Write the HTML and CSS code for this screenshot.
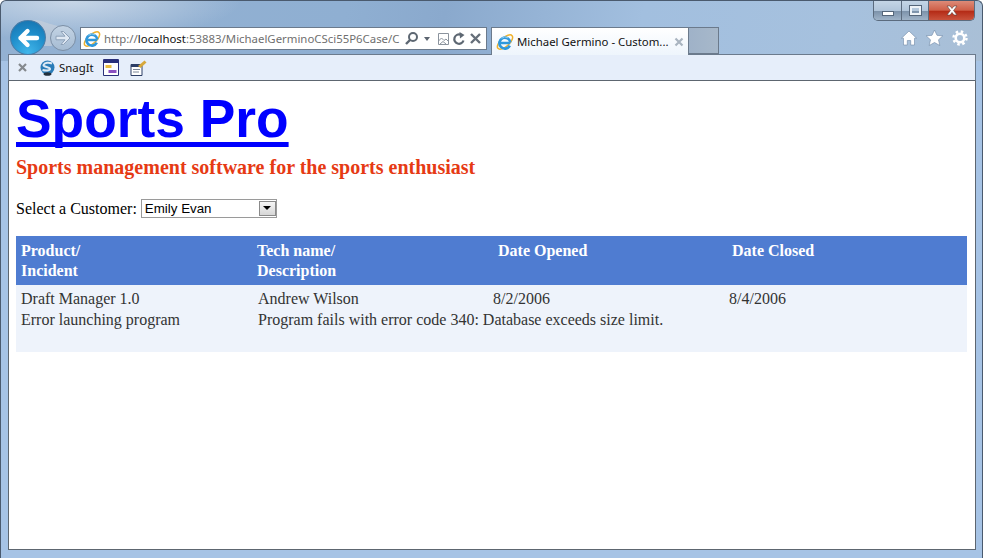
FILE: index.html

```html
<!DOCTYPE html>
<html lang="en">
<head>
  <meta charset="UTF-8" />
  <title>Michael Germino - Customer Incidents</title>
  <link rel="stylesheet" href="styles.css">
</head>
<body>
  <svg class="defs" width="0" height="0">
    <defs>
      <g id="ie-logo">
        <ellipse cx="9" cy="9" rx="9.500" ry="4.300" transform="rotate(-42 9 9)" fill="none" stroke="#efb12c" stroke-width="1.500"/>
        <path d="M3.800 10h10.400M13.800 12.700A5.500 5.500 0 1 1 14.400 9.500" fill="none" stroke="#2f98dc" stroke-width="2.700"/>
        <path d="M5.500 5.300A5.500 5.500 0 0 1 12 4.800" fill="none" stroke="#8fd0f2" stroke-width="1"/>
      </g>
    </defs>
  </svg>
  <div class="window">
    <div class="caption">
      <div class="caption-btns">
        <span class="cap-btn cap-min"><i></i></span>
        <span class="cap-btn cap-max"><i></i></span>
        <span class="cap-btn cap-close">
          <svg width="14" height="11" viewBox="0 0 14 11"><path d="M2 1h3l2 2.500L9 1h3L8.600 5.500 12 10H9L7 7.500 5 10H2l3.400-4.500z" fill="#fff" stroke="#5a3a34" stroke-width=".6"/></svg>
        </span>
      </div>
    </div>

    <div class="navrow">
      <svg class="nav-glow" width="60" height="34" viewBox="0 0 60 34"><path d="M18 0C30 -1 36 3 44 5 50 7 54 6 56 6 46 6 40 14 42 26L28 26z" fill="#c3cedb" fill-opacity=".75"/></svg>
      <span class="back">
        <svg width="24" height="22" viewBox="0 0 24 22"><path d="M4.500 11H21M11.500 4 4.500 11l7 7" fill="none" stroke="#fff" stroke-width="4.400" stroke-linejoin="round" stroke-linecap="round"/></svg>
      </span>
      <span class="forward">
        <svg width="18" height="16" viewBox="0 0 18 16"><path d="M16 8 9.500 1.500H7l4 4.700H2v3.600h9l-4 4.700h2.500z" fill="#dfe8f3" stroke="#8ea1b8" stroke-width="1"/></svg>
      </span>
      <div class="address">
        <svg class="ie" width="18" height="18" viewBox="0 0 18 18"><use href="#ie-logo"/></svg>
        <span class="url">http://<b>localhost</b>:53883/MichaelGerminoCSci55P6Case/C</span>
        <svg class="ic-search" width="15" height="15" viewBox="0 0 15 15"><circle cx="9" cy="6" r="4" fill="none" stroke="#5d6772" stroke-width="2"/><path d="M6 9 2 13" stroke="#5d6772" stroke-width="2.400"/></svg>
        <span class="caret"></span>
        <svg class="ic-compat" width="13" height="14" viewBox="0 0 13 14"><path d="M1.500 1.500h10v11h-10zM1.500 9l3-3 2.500 2.500 2-1.500 2.500 2.500M3 12l3-2.500 3 2.500" fill="none" stroke="#8b939d" stroke-width="1"/></svg>
        <svg class="ic-refresh" width="14" height="14" viewBox="0 0 14 14"><path d="M11.500 8.500A4.700 4.700 0 1 1 8.500 2.600" fill="none" stroke="#5d6772" stroke-width="2.200"/><path d="M7.500 0 12.500 3 8 6.500z" fill="#5d6772"/></svg>
        <svg class="ic-stop" width="13" height="13" viewBox="0 0 13 13"><path d="M2 2l9 9M11 2l-9 9" stroke="#666f7a" stroke-width="2.400"/></svg>
      </div>
      <div class="tab">
        <svg class="ie" width="18" height="18" viewBox="0 0 18 18"><use href="#ie-logo"/></svg>
        <span class="tab-title">Michael Germino - Custom...</span>
        <svg class="tab-x" width="10" height="10" viewBox="0 0 10 10"><path d="M1.500 1.500l7 7M8.500 1.500l-7 7" stroke="#a9b4c0" stroke-width="2.200"/></svg>
      </div>
      <div class="newtab"></div>
      <div class="tools">
        <svg width="16" height="16" viewBox="0 0 16 16"><path d="M8 1 15.500 8.200H13.500V15H9.700v-4.500H6.300V15H2.500V8.200H.5z" fill="#fff" stroke="#6f88a6" stroke-width=".6"/></svg>
        <svg width="17" height="16" viewBox="0 0 17 16"><path d="M8.500 0l2.500 5.300 5.800.6-4.300 3.900 1.300 5.700-5.300-3-5.300 3 1.300-5.700L.2 5.900 6 5.300z" fill="#fff" stroke="#6f88a6" stroke-width=".6"/></svg>
        <svg width="16" height="16" viewBox="0 0 16 16"><circle cx="8" cy="8" r="4.300" fill="none" stroke="#fff" stroke-width="2.600"/><circle cx="8" cy="8" r="6.500" fill="none" stroke="#fff" stroke-width="2.400" stroke-dasharray="2.500 2.600"/></svg>
      </div>
    </div>

    <div class="toolbar">
      <svg class="tb-x" width="9" height="9" viewBox="0 0 9 9"><path d="M1 1l7 7M8 1L1 8" stroke="#85898e" stroke-width="2.200"/></svg>
      <span class="snagit">
        <svg width="15" height="16" viewBox="0 0 15 16"><circle cx="7.500" cy="7.500" r="7" fill="#2a7cb8"/><path d="M12 3.500C9 2 4.500 2.500 3.500 5c-.7 2 6.500 2 6.500 4 0 1.500-4 2-7.500 1" fill="none" stroke="#dfeaf4" stroke-width="2"/><ellipse cx="7.500" cy="14" rx="4" ry="1.800" fill="#23303c"/></svg>
        <span class="snagit-label">SnagIt</span>
      </span>
      <svg class="tb-ic" width="16" height="17" viewBox="0 0 16 17"><path d="M.5 .5h15v16H.5z" fill="#fff" stroke="#29307a"/><path d="M1 1h14v3H1z" fill="#29307a"/><path d="M2.500 6h6v3h-6z" fill="#e9bd3f"/><path d="M5.500 11h8v3h-8z" fill="#8a4fc0"/></svg>
      <svg class="tb-ic" width="17" height="16" viewBox="0 0 17 16"><path d="M1 4.500h11v11H1z" fill="#fff" stroke="#2d3e66"/><path d="M1 4.500h11v2.500H1z" fill="#2d3e66"/><path d="M3 9.500h7M3 12h6" stroke="#7b8698"/><path d="M8 6 14.500 .5 16.500 2.500 10.500 8z" fill="#d7a83b"/></svg>
    </div>

    <div class="content">
      <h1 class="brand"><a href="#">Sports Pro</a></h1>
      <h2 class="tagline">Sports management software for the sports enthusiast</h2>
      <div class="picker">
        <label for="customer">Select a Customer:</label>
        <span class="select-box">
          <select id="customer"><option>Emily Evan</option></select>
          <span class="select-arrow"></span>
        </span>
      </div>
      <table class="incidents">
        <thead>
          <tr>
            <th class="col-a">Product/<br>Incident</th>
            <th class="col-b">Tech name/<br>Description</th>
            <th class="col-c">Date Opened</th>
            <th class="col-d">Date Closed</th>
          </tr>
        </thead>
        <tbody>
          <tr>
            <td>Draft Manager 1.0</td>
            <td>Andrew Wilson</td>
            <td>8/2/2006</td>
            <td>8/4/2006</td>
          </tr>
          <tr>
            <td>Error launching program</td>
            <td colspan="3">Program fails with error code 340: Database exceeds size limit.</td>
          </tr>
          <tr class="spacer"><td colspan="4"></td></tr>
        </tbody>
      </table>
    </div>
  </div>
</body>
</html>
```

FILE: styles.css

```css
html, body {
  margin: 0;
  padding: 0;
}
body {
  width: 983px;
  height: 558px;
  overflow: hidden;
  background: #fff;
}
.defs { display: block; height: 0; }
.window {
  box-sizing: border-box;
  width: 983px;
  height: 558px;
  display: flex;
  flex-direction: column;
  padding: 0 6px 8px 7px;
  border: 1px solid #4a5a6e;
  border-bottom: 0;
  border-radius: 6px 6px 0 0;
  background:
    radial-gradient(ellipse 170px 40px at 70px 0, rgba(222,230,240,.7), rgba(222,230,240,0)),
    linear-gradient(100deg, #93b1d2 0%, #8fafd2 35%, #8aa9cd 45%, #a2bfdf 65%, #a6c1de 85%, #a9bfd6 100%) top / 100% 60px no-repeat,
    #a6c3e5;
  font-family: "Noto Sans", sans-serif;
}

/* caption */
.caption {
  height: 19px;
  display: flex;
  justify-content: flex-end;
}
.caption-btns {
  display: flex;
  height: 19px;
  margin-right: 1px;
  border: 1px solid #5b6b7e;
  border-top: 0;
  border-radius: 0 0 5px 5px;
  overflow: hidden;
}
.cap-btn {
  display: flex;
  align-items: center;
  justify-content: center;
  height: 19px;
  background: linear-gradient(#c4d5e6 0%, #b1c5da 50%, #7d93ab 55%, #9fb3c8 100%);
  border-right: 1px solid #5b6b7e;
}
.cap-min { width: 27px; }
.cap-min i {
  display: block;
  width: 10px;
  height: 3px;
  margin-top: 6px;
  background: #fff;
  border: 1px solid #55667a;
}
.cap-max { width: 26px; }
.cap-max i {
  display: block;
  box-sizing: border-box;
  width: 11px;
  height: 9px;
  border: 2px solid #eef3f8;
  outline: 1px solid #55667a;
}
.cap-close {
  width: 45px;
  border-right: 0;
  background: linear-gradient(#dd8b78 0%, #cf5f48 48%, #b52c17 55%, #c9523c 100%);
}

/* nav row */
.navrow {
  height: 34px;
  display: flex;
  align-items: flex-start;
  position: relative;
}
.nav-glow {
  position: absolute;
  left: 2px;
  top: 0;
}
.back {
  position: relative;
  width: 36px;
  height: 35px;
  margin-left: 2px;
  flex: none;
  display: flex;
  align-items: center;
  justify-content: center;
  border-radius: 50%;
  background: radial-gradient(circle at 50% 95%, #41b6ea 0%, #1f8dca 55%, #1670ac 100%);
  border: 1px solid #4a7ba6;
  box-sizing: border-box;
}
.forward {
  position: relative;
  width: 26px;
  height: 26px;
  box-sizing: border-box;
  margin: 5px 0 0 4px;
  flex: none;
  display: flex;
  align-items: center;
  justify-content: center;
  border-radius: 50%;
  border: 1px solid #7c8fa5;
  background: linear-gradient(#c3d3e4, #a6bcd3);
}
.address {
  box-sizing: border-box;
  width: 407px;
  height: 23px;
  margin: 7px 0 0 4px;
  padding: 0 4px 0 2px;
  flex: none;
  display: flex;
  align-items: center;
  background: #fff;
  border: 1px solid #6b7a8c;
  font-size: 11.400px;
  color: #6f6f6f;
}
.url {
  flex: 1;
  min-width: 0;
  margin-left: 3px;
  white-space: nowrap;
}
.url b {
  font-weight: 400;
  color: #111;
}
.caret {
  flex: none;
  width: 0;
  height: 0;
  margin-left: 5px;
  border: 3.500px solid transparent;
  border-top: 4px solid #5b6470;
  border-bottom: 0;
}
.ie, .ic-search { flex: none; }
.ic-compat { flex: none; margin-left: 7px; }
.ic-refresh { flex: none; margin-left: 2px; }
.ic-stop { flex: none; margin-left: 3px; }
.tab {
  box-sizing: border-box;
  width: 198px;
  height: 28px;
  margin: 7px 0 0 4px;
  padding: 0 4px;
  flex: none;
  display: flex;
  align-items: center;
  background: linear-gradient(#fff, #eef5fc);
  border: 1px solid #6b7a8c;
  border-bottom: 0;
  font-size: 11.400px;
  color: #111;
}
.tab-title {
  flex: 1;
  margin-left: 3px;
  white-space: nowrap;
}
.newtab {
  width: 30px;
  height: 27px;
  box-sizing: border-box;
  margin-top: 7px;
  flex: none;
  background: linear-gradient(90deg, #9fb2c8, #a7b8ca);
  border: 1px solid #6b7a8c;
  border-left: 0;
}
.tools {
  margin: 10px 0 0 auto;
  padding-right: 8px;
  display: flex;
  gap: 9px;
}

/* command bar */
.toolbar {
  box-sizing: border-box;
  height: 27px;
  display: flex;
  align-items: center;
  padding-left: 9px;
  background: #e6eefa;
  border: 1px solid #6b7a8c;
  border-bottom-color: #5d6670;
  font-size: 11.400px;
  color: #111;
}
.tb-x { margin-right: 13px; }
.snagit {
  display: flex;
  align-items: center;
  width: 63px;
}
.snagit-label { margin-left: 4px; }
.tb-ic { margin-right: 11px; }

/* page */
.content {
  flex: 1;
  box-sizing: border-box;
  padding: 0 7px;
  background: #fff;
  border: 1px solid #5d6670;
  border-top: 0;
  font-family: "Liberation Serif", "Times New Roman", serif;
  font-size: 16px;
  color: #000;
}
.brand {
  margin: 7px 0 0;
  font-family: "Liberation Sans", Arial, sans-serif;
  font-size: 40pt;
  line-height: 62px;
  font-weight: 700;
}
.brand a {
  color: #0000ff;
  text-decoration-thickness: 5px;
  text-underline-offset: 5px;
  text-decoration-skip-ink: none;
}
.tagline {
  margin: 6px 0 0;
  font-size: 20px;
  line-height: 22px;
  font-weight: 700;
  color: #e63a14;
}
.picker {
  display: flex;
  align-items: flex-start;
  gap: 4px;
  margin-top: 21px;
  height: 20px;
  line-height: 20px;
}
.select-box {
  position: relative;
  display: block;
  width: 136px;
  height: 19px;
}
.select-box select {
  appearance: none;
  display: block;
  box-sizing: border-box;
  width: 136px;
  height: 19px;
  padding: 0 0 0 3px;
  border: 1px solid #9a9a9a;
  border-radius: 0;
  background: #fff;
  font-family: "Liberation Sans", Arial, sans-serif;
  font-size: 13.330px;
  color: #000;
}
.select-arrow {
  position: absolute;
  right: 1px;
  top: 2px;
  box-sizing: border-box;
  width: 17px;
  height: 15px;
  border: 1px solid #8a8a8a;
  background: linear-gradient(#f6f6f6, #d6d6d6);
  pointer-events: none;
}
.select-arrow::after {
  content: "";
  position: absolute;
  left: 3px;
  top: 4px;
  border: 4px solid transparent;
  border-top: 4px solid #000;
  border-bottom: 0;
}
.incidents {
  width: 951px;
  margin-top: 17px;
  border-collapse: collapse;
  table-layout: fixed;
  background: #eef3fb;
  color: #333;
}
.incidents th {
  box-sizing: border-box;
  height: 49px;
  padding: 0;
  background: #4f7cd1;
  color: #fff;
  font-weight: 700;
  text-align: left;
  line-height: 20px;
}
.incidents th.col-a { width: 237px; padding-left: 5px; }
.incidents th.col-b { width: 235px; padding-left: 4px; }
.incidents th.col-c { width: 236px; padding-left: 10px; padding-bottom: 20px; }
.incidents th.col-d { padding-left: 8px; padding-bottom: 20px; }
.incidents td {
  padding: 0 0 0 5px;
  height: 21px;
  line-height: 21px;
}
.incidents tbody tr:first-child td { padding-top: 3px; }
.incidents tr.spacer td { height: 22px; }
```
